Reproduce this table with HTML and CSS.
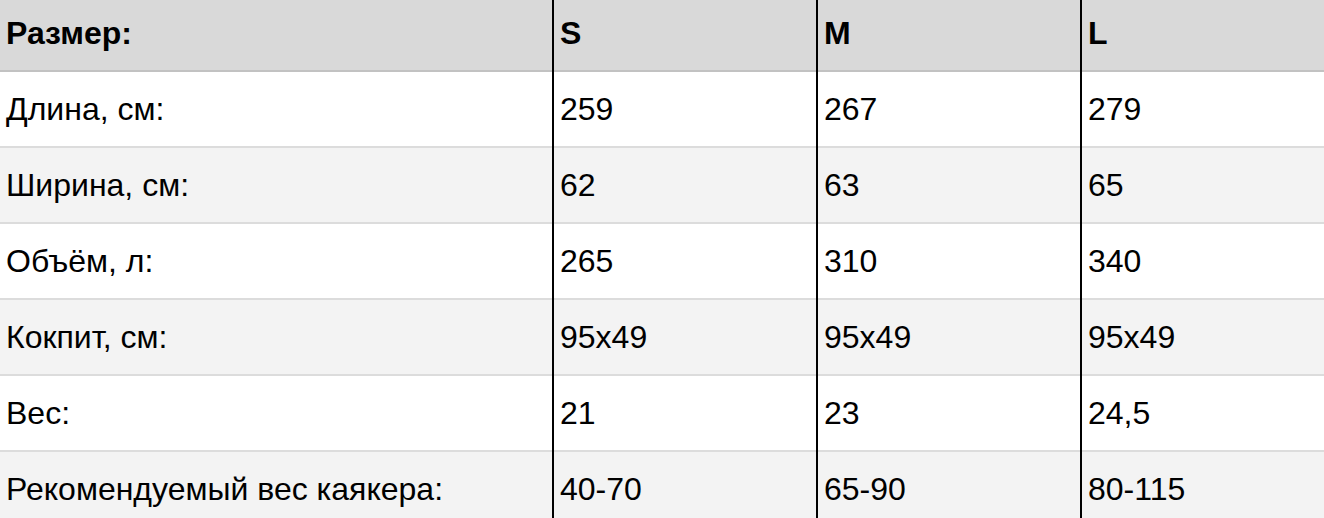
FILE: index.html
```html
<!DOCTYPE html>
<html lang="ru">
<head>
<meta charset="utf-8">
<title>Размеры</title>
<link rel="stylesheet" href="styles.css">
</head>
<body>
<table class="sizes">
  <colgroup>
    <col class="c-label">
    <col class="c-size">
    <col class="c-size">
    <col class="c-last">
  </colgroup>
  <thead>
    <tr class="head">
      <th>Размер:</th>
      <th class="v">S</th>
      <th class="v">M</th>
      <th class="v">L</th>
    </tr>
  </thead>
  <tbody>
    <tr class="odd">
      <td>Длина, см:</td>
      <td class="v">259</td>
      <td class="v">267</td>
      <td class="v">279</td>
    </tr>
    <tr class="even">
      <td>Ширина, см:</td>
      <td class="v">62</td>
      <td class="v">63</td>
      <td class="v">65</td>
    </tr>
    <tr class="odd">
      <td>Объём, л:</td>
      <td class="v">265</td>
      <td class="v">310</td>
      <td class="v">340</td>
    </tr>
    <tr class="even">
      <td>Кокпит, см:</td>
      <td class="v">95x49</td>
      <td class="v">95x49</td>
      <td class="v">95x49</td>
    </tr>
    <tr class="odd">
      <td>Вес:</td>
      <td class="v">21</td>
      <td class="v">23</td>
      <td class="v">24,5</td>
    </tr>
    <tr class="even">
      <td>Рекомендуемый вес каякера:</td>
      <td class="v">40-70</td>
      <td class="v">65-90</td>
      <td class="v">80-115</td>
    </tr>
  </tbody>
</table>
</body>
</html>
```

FILE: styles.css
```css
html, body {
  margin: 0;
  padding: 0;
  background: #ffffff;
}

.sizes {
  width: 1324px;
  border-collapse: separate;
  border-spacing: 0;
  table-layout: fixed;
  font-family: "Liberation Sans", Arial, sans-serif;
  font-size: 32px;
  color: #000;
}

.c-label { width: 552px; }
.c-size { width: 264px; }
.c-last { width: 244px; }

.sizes th,
.sizes td {
  text-align: left;
  vertical-align: middle;
  padding: 0 0 3px 6px;
  box-sizing: border-box;
  line-height: 36px;
  white-space: nowrap;
  box-shadow: inset 0 -2px 0 #dcdcdc;
}

.sizes th {
  font-weight: bold;
  height: 72px;
  padding-bottom: 6px;
  background: #d9d9d9;
  box-shadow: inset 0 -2px 0 #c2c2c2;
}

.sizes td { height: 76px; }

.sizes .v {
  border-left: 2px solid #000;
}

.odd td { background: #ffffff; }
.even td { background: #f3f3f3; }
```
